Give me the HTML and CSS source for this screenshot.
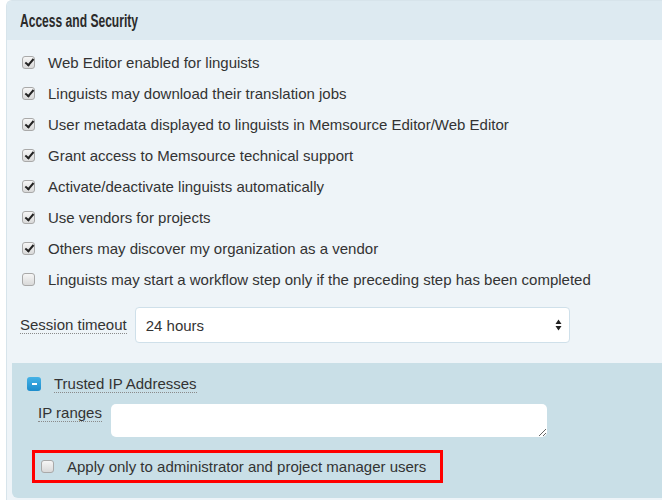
FILE: index.html
```html
<!DOCTYPE html>
<html>
<head>
<meta charset="utf-8">
<link rel="stylesheet" href="styles.css">
</head>
<body>
<div class="panel">
  <div class="panel-head"><h2 class="title">Access and Security</h2></div>
  <div class="panel-body">
    <ul class="checks">
      <li class="row"><span class="cb on"></span><span>Web Editor enabled for linguists</span></li>
      <li class="row"><span class="cb on"></span><span>Linguists may download their translation jobs</span></li>
      <li class="row"><span class="cb on"></span><span>User metadata displayed to linguists in Memsource Editor/Web Editor</span></li>
      <li class="row"><span class="cb on"></span><span>Grant access to Memsource technical support</span></li>
      <li class="row"><span class="cb on"></span><span>Activate/deactivate linguists automatically</span></li>
      <li class="row"><span class="cb on"></span><span>Use vendors for projects</span></li>
      <li class="row"><span class="cb on"></span><span>Others may discover my organization as a vendor</span></li>
      <li class="row"><span class="cb"></span><span>Linguists may start a workflow step only if the preceding step has been completed</span></li>
    </ul>
    <div class="session">
      <span class="lbl">Session timeout</span>
      <div class="select">
        <span>24 hours</span>
        <svg class="arrows" width="7" height="12" viewBox="0 0 7 12"><path d="M3.5 0.5 L6.5 5 L0.5 5 Z M3.5 11.5 L6.5 7 L0.5 7 Z" fill="#222"/></svg>
      </div>
    </div>
    <div class="trusted">
      <div class="trusted-head">
        <span class="minus"><span></span></span>
        <span class="lbl">Trusted IP Addresses</span>
      </div>
      <div class="ip-row">
        <span class="lbl">IP ranges</span>
        <textarea class="ta"></textarea>
      </div>
      <div class="highlight">
        <span class="cb"></span><span>Apply only to administrator and project manager users</span>
      </div>
    </div>
  </div>
</div>
</body>
</html>
```
FILE: styles.css
```css
html, body { margin: 0; padding: 0; }
body {
  font-family: "Liberation Sans", Arial, sans-serif;
  font-size: 15px;
  color: #333;
  background: #fff;
  overflow: hidden;
}
.panel {
  margin-left: 6px;
  border-left: 1px solid #d7e4eb;
  border-top: 1px solid #d7e4eb;
  border-top-left-radius: 6px;
  background: #eef4f8;
  height: 500px;
  overflow: hidden;
}
.panel-head {
  height: 39px;
  background: #ddeaf1;
  display: flex;
  align-items: center;
  padding-left: 13px;
}
.title {
  margin: 0;
  font-family: "Liberation Sans", Arial, sans-serif;
  font-weight: bold;
  font-size: 18px;
  color: #2b2b2b;
  transform: scaleX(0.67);
  transform-origin: left center;
  padding-top: 1px;
  white-space: nowrap;
}
.panel-body {
  padding: 7px 0 0 5px;
}
.checks {
  list-style: none;
  margin: 0;
  padding: 0 0 0 10px;
}
.row {
  height: 31px;
  display: flex;
  align-items: center;
  gap: 13px;
}
.cb {
  width: 13px;
  height: 13px;
  box-sizing: border-box;
  border: 1px solid #a9a9a9;
  border-radius: 3px;
  background: linear-gradient(#f6f6f6, #d9d9d9);
  flex: none;
  position: relative;
}
.cb.on::after {
  content: "";
  position: absolute;
  left: 3.5px;
  top: 0px;
  width: 3px;
  height: 7px;
  border: solid #222;
  border-width: 0 2.5px 2.5px 0;
  transform: rotate(40deg);
}
.session {
  display: flex;
  align-items: center;
  gap: 8px;
  padding-left: 8px;
  margin-top: 12px;
}
.lbl {
  border-bottom: 1px dotted #8a8a8a;
  line-height: 17px;
}
.select {
  width: 435px;
  height: 36px;
  box-sizing: border-box;
  background: #fff;
  border: 1px solid #cfe0ea;
  border-radius: 4px;
  display: flex;
  align-items: center;
  justify-content: space-between;
  padding: 0 7px 0 10px;
}
.trusted {
  margin-top: 20px;
  background: #c9dfe7;
  border-bottom-left-radius: 6px;
  height: 135px;
  padding: 12px 0 0 15px;
  box-sizing: border-box;
}
.trusted-head {
  display: flex;
  align-items: center;
  gap: 13px;
  height: 17px;
}
.minus {
  width: 14px;
  height: 14px;
  border-radius: 3px;
  background: linear-gradient(#45b2e6, #1c8ccc);
  display: flex;
  align-items: center;
  justify-content: center;
  flex: none;
}
.minus span {
  width: 5px;
  height: 2px;
  background: #fff;
}
.ip-row {
  display: flex;
  align-items: flex-start;
  gap: 9px;
  margin-top: 12px;
  padding-left: 11px;
}
.ta {
  width: 436px;
  height: 33px;
  box-sizing: border-box;
  border: none;
  border-radius: 5px;
  background: #fff;
  margin: 0;
  padding: 4px;
  font: inherit;
  resize: vertical;
  outline: none;
}
.highlight {
  margin-top: 13px;
  margin-left: 5px;
  width: 411px;
  height: 33px;
  box-sizing: border-box;
  border: 3px solid #f00;
  display: flex;
  align-items: center;
  gap: 13px;
  padding-left: 6px;
}
```
